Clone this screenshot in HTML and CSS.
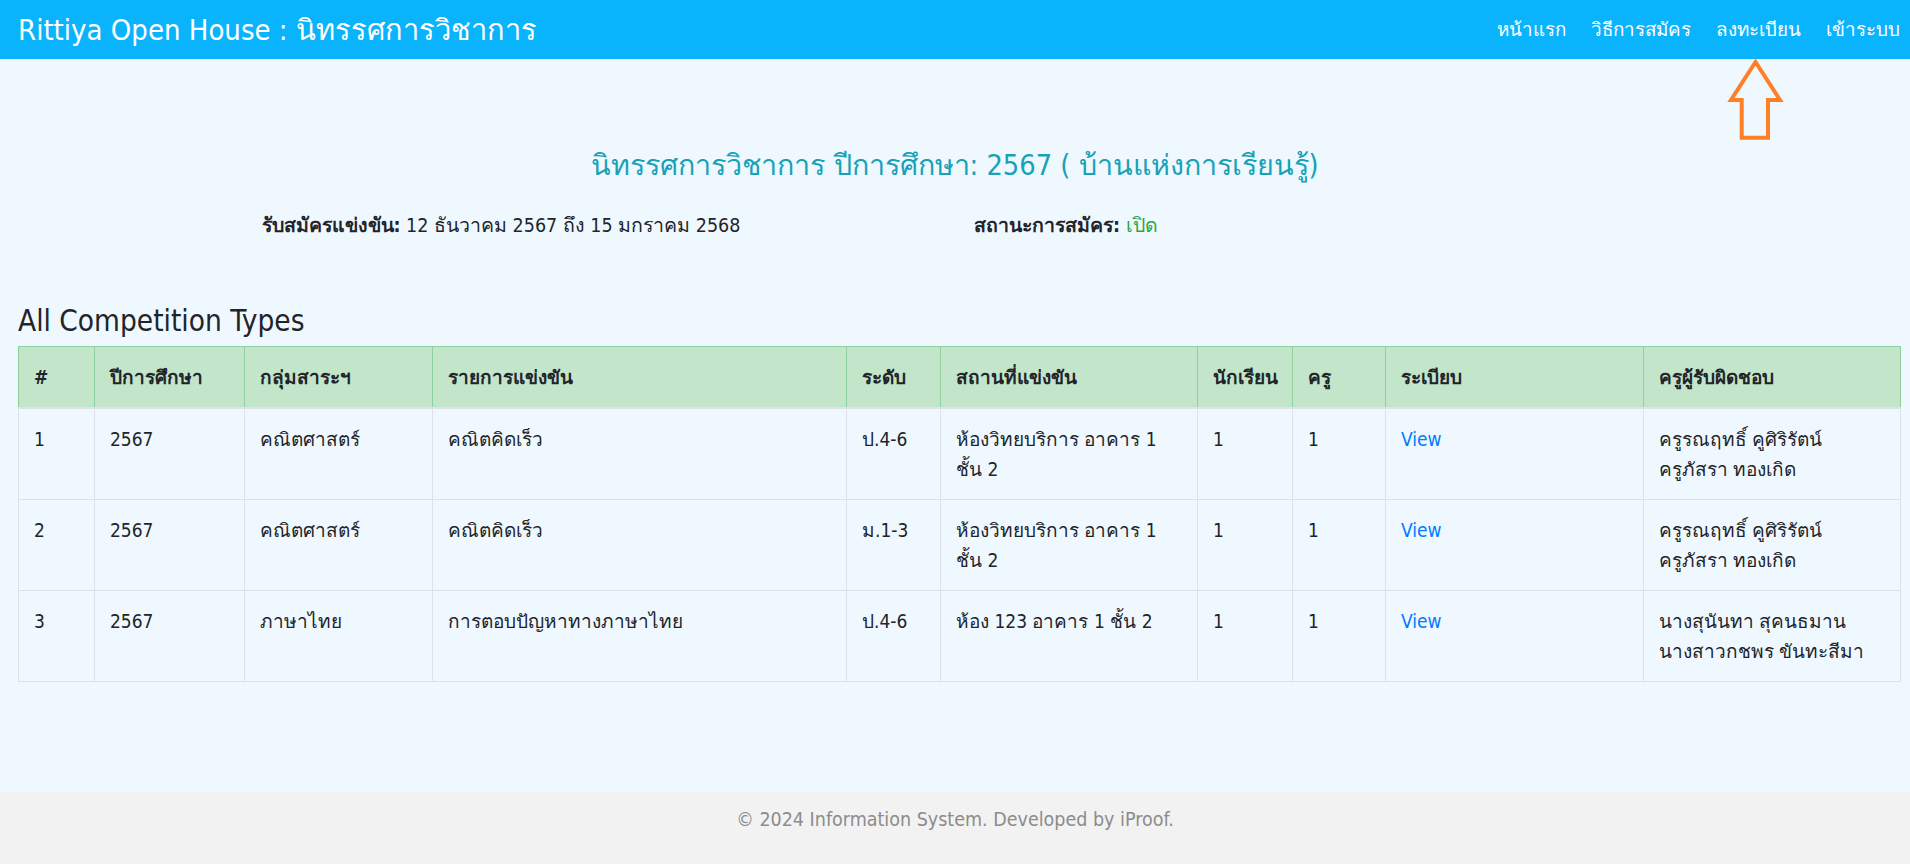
FILE: index.html
```html
<!DOCTYPE html>
<html lang="th">
<head>
    <meta charset="UTF-8">
    <title>Rittiya Open House</title>
    <link rel="stylesheet" href="styles.css">
</head>
<body>
<nav class="topbar">
    <a class="brand" href="#">Rittiya Open House : นิทรรศการวิชาการ</a>
    <ul class="menu">
        <li><a href="#">หน้าแรก</a></li>
        <li><a href="#">วิธีการสมัคร</a></li>
        <li><a href="#">ลงทะเบียน</a></li>
        <li><a href="#">เข้าระบบ</a></li>
    </ul>
    <svg class="pointer" width="60" height="84" viewBox="0 0 60 84">
        <polygon points="29.5,4 5,42 15.7,42 15.7,79.7 42,79.7 42,42 54,42" fill="none" stroke="#ff7f27" stroke-width="4"/>
    </svg>
</nav>

<main class="page">
    <div class="container">
        <h3 class="title">นิทรรศการวิชาการ ปีการศึกษา: 2567 ( บ้านแห่งการเรียนรู้)</h3>
        <div class="info">
            <div class="info-col"><b>รับสมัครแข่งขัน:</b> 12 ธันวาคม 2567 ถึง 15 มกราคม 2568</div>
            <div class="info-col"><b>สถานะการสมัคร:</b> <span class="open">เปิด</span></div>
        </div>
    </div>

    <div class="list">
        <h4 class="list-title">All Competition Types</h4>
        <table class="grid">
            <colgroup>
                <col style="width:76px">
                <col style="width:150px">
                <col style="width:188px">
                <col style="width:414px">
                <col style="width:94px">
                <col style="width:257px">
                <col style="width:95px">
                <col style="width:93px">
                <col style="width:258px">
                <col style="width:257px">
            </colgroup>
            <thead>
            <tr>
                <th>#</th>
                <th>ปีการศึกษา</th>
                <th>กลุ่มสาระฯ</th>
                <th>รายการแข่งขัน</th>
                <th>ระดับ</th>
                <th>สถานที่แข่งขัน</th>
                <th>นักเรียน</th>
                <th>ครู</th>
                <th>ระเบียบ</th>
                <th>ครูผู้รับผิดชอบ</th>
            </tr>
            </thead>
            <tbody>
            <tr>
                <td>1</td>
                <td>2567</td>
                <td>คณิตศาสตร์</td>
                <td>คณิตคิดเร็ว</td>
                <td>ป.4-6</td>
                <td>ห้องวิทยบริการ อาคาร 1 ชั้น 2</td>
                <td>1</td>
                <td>1</td>
                <td><a href="#">View</a></td>
                <td>ครูรณฤทธิ์ คูศิริรัตน์<br>ครูภัสรา ทองเกิด</td>
            </tr>
            <tr>
                <td>2</td>
                <td>2567</td>
                <td>คณิตศาสตร์</td>
                <td>คณิตคิดเร็ว</td>
                <td>ม.1-3</td>
                <td>ห้องวิทยบริการ อาคาร 1 ชั้น 2</td>
                <td>1</td>
                <td>1</td>
                <td><a href="#">View</a></td>
                <td>ครูรณฤทธิ์ คูศิริรัตน์<br>ครูภัสรา ทองเกิด</td>
            </tr>
            <tr>
                <td>3</td>
                <td>2567</td>
                <td>ภาษาไทย</td>
                <td>การตอบปัญหาทางภาษาไทย</td>
                <td>ป.4-6</td>
                <td>ห้อง 123 อาคาร 1 ชั้น 2</td>
                <td>1</td>
                <td>1</td>
                <td><a href="#">View</a></td>
                <td>นางสุนันทา สุคนธมาน<br>นางสาวกชพร ขันทะสีมา</td>
            </tr>
            </tbody>
        </table>
    </div>
</main>

<footer class="foot">
    &copy; 2024 Information System. Developed by iProof.
</footer>
</body>
</html>
```

FILE: styles.css
```css
* {
    margin: 0;
    padding: 0;
    box-sizing: border-box;
}
html, body {
    height: 100%;
}
body {
    display: flex;
    flex-direction: column;
    min-height: 100vh;
    background-color: #f0f8ff;
    color: #212529;
    font-family: Tahoma, "DejaVu Sans Condensed", "DejaVu Sans", "Noto Sans", sans-serif;
    font-stretch: condensed;
    font-size: 19px;
    line-height: 30px;
}
a {
    text-decoration: none;
}

/* top bar */
.topbar {
    position: relative;
    height: 59px;
    display: flex;
    align-items: center;
    justify-content: space-between;
    padding: 0 10px 0 18px;
    background-color: #0ab4fc;
}
.brand {
    color: #fff;
    font-size: 29px;
    line-height: 36px;
}
.menu {
    display: flex;
    gap: 25px;
    list-style: none;
}
.menu a {
    color: #fff;
    font-size: 18.8px;
}
.pointer {
    position: absolute;
    left: 1726px;
    top: 58px;
}

/* content */
.page {
    flex: 1;
}
.container {
    width: 1425px;
    margin: 0 auto;
    padding: 0 19px;
}
.title {
    margin-top: 86px;
    text-align: center;
    color: #17a2b8;
    font-size: 28.7px;
    font-weight: normal;
    line-height: 40px;
}
.info {
    display: flex;
    margin-top: 26px;
    font-size: 19.5px;
}
.info-col {
    width: 50%;
}
.info-col + .info-col {
    padding-left: 19px;
}
.open {
    color: #28a745;
}

.list {
    margin: 62px 10px 0 18px;
}
.list-title {
    font-size: 29.5px;
    font-weight: normal;
    line-height: 36px;
    margin-bottom: 7px;
}
.grid {
    width: 1882px;
    table-layout: fixed;
    border-collapse: collapse;
}
.grid th,
.grid td {
    padding: 15px;
    text-align: left;
    vertical-align: top;
    border: 1px solid #dee2e6;
}
.grid th {
    background-color: #c3e6cb;
    border-color: #8fd19e;
    border-bottom: 2px solid #dee2e6;
    font-weight: bold;
    vertical-align: bottom;
}
.grid td a {
    color: #007bff;
}

.foot {
    height: 72px;
    padding-top: 13px;
    text-align: center;
    background-color: #f2f2f2;
    color: #8c8c8c;
    font-size: 19.5px;
}
```
